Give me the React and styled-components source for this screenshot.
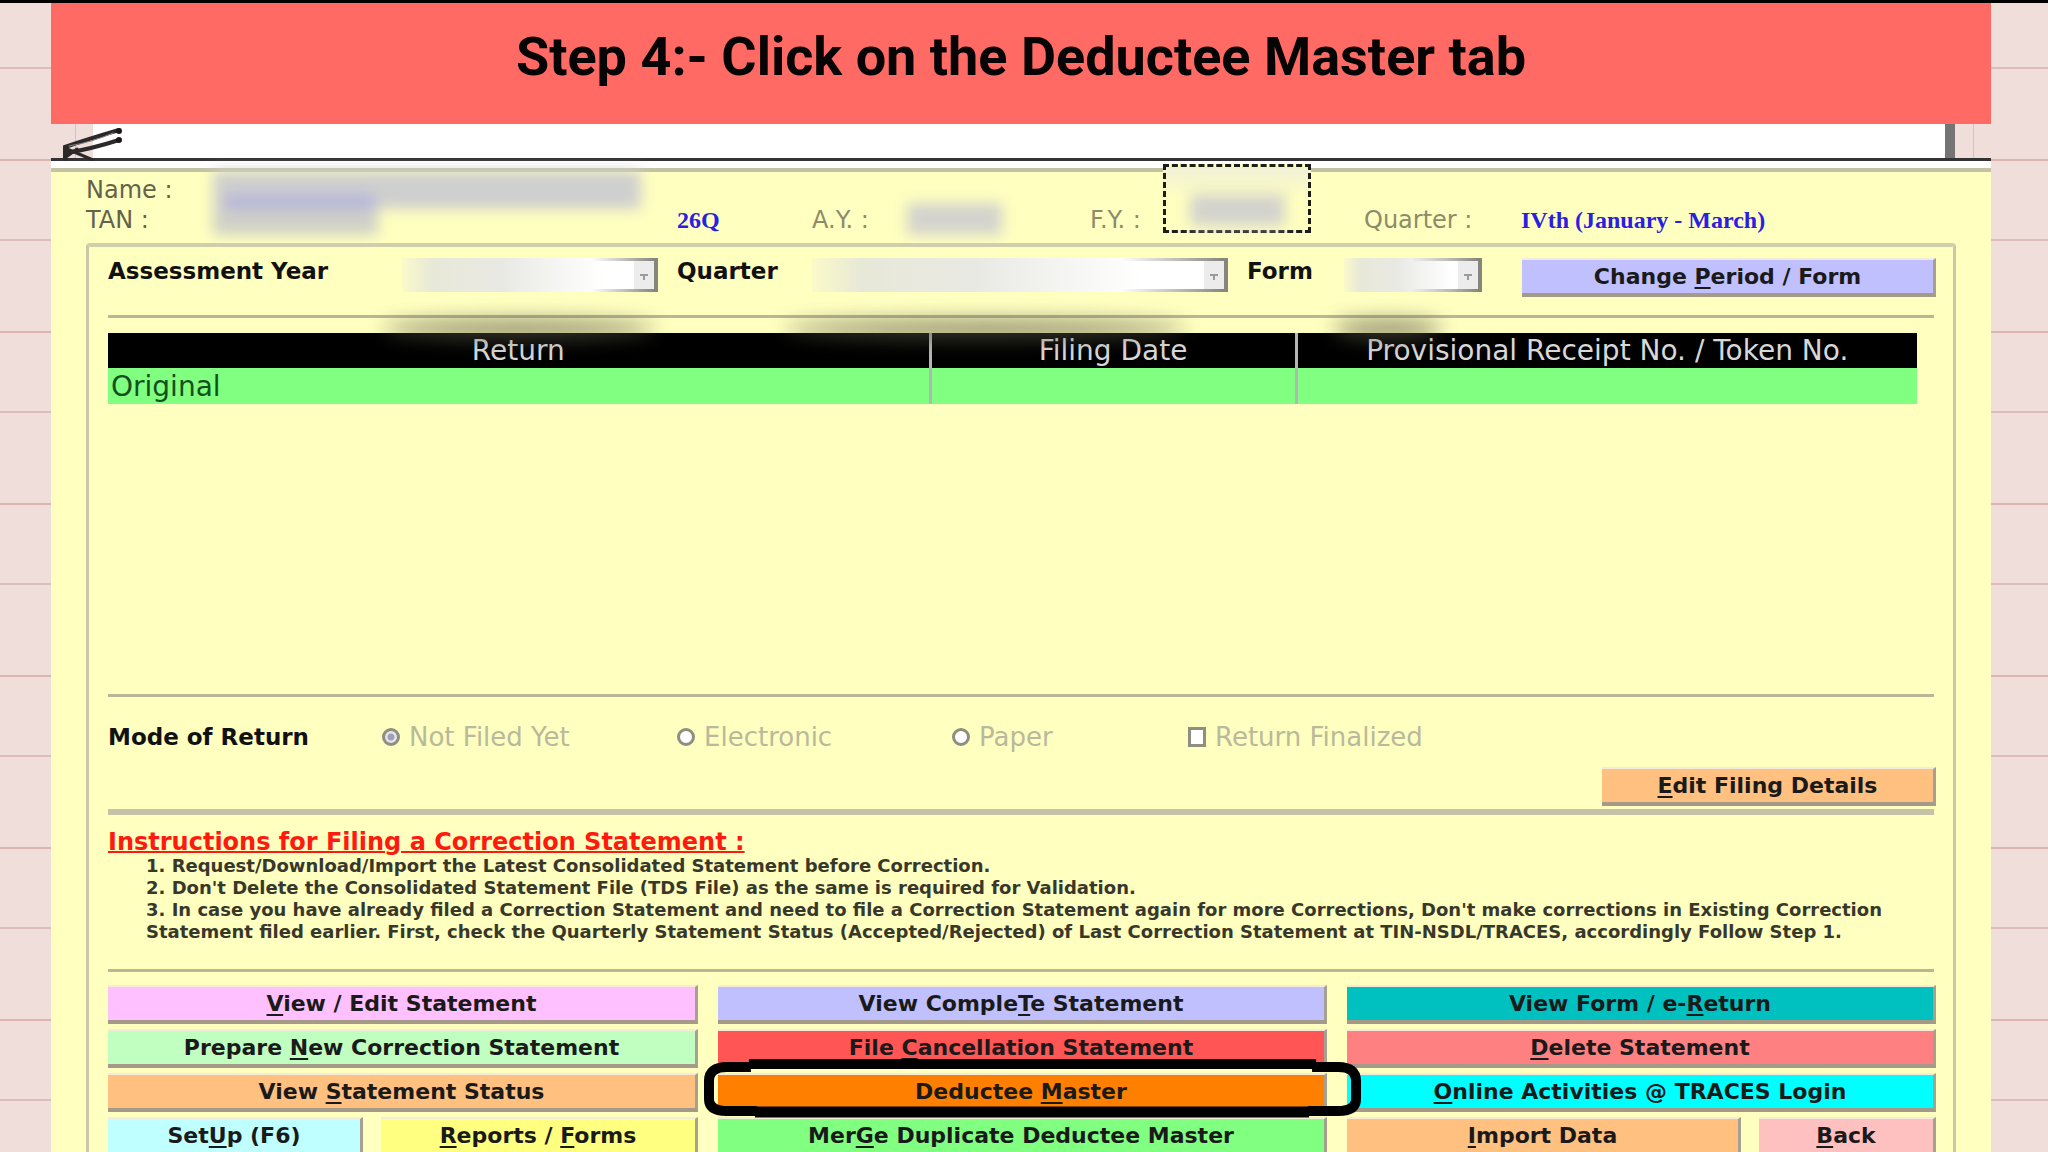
import React from "react";
import styled, { createGlobalStyle } from "styled-components";

const returns = [{ type: "Original", date: "", receipt: "" }];

const modes = ["Not Filed Yet", "Electronic", "Paper"];

const steps = [
  "1. Request/Download/Import the Latest Consolidated Statement before Correction.",
  "2. Don't Delete the Consolidated Statement File (TDS File) as the same is required for Validation.",
  "3. In case you have already filed a Correction Statement and need to file a Correction Statement again for more Corrections, Don't make corrections in Existing Correction Statement filed earlier. First, check the Quarterly Statement Status (Accepted/Rejected) of Last Correction Statement at TIN-NSDL/TRACES, accordingly Follow Step 1.",
];

const App = () => {
  return (
    <Page>
      <GlobalStyle />
      <Banner>
        <h1>Step 4:- Click on the Deductee Master tab</h1>
      </Banner>
      <Strip>
        <Paper />
        <Clip viewBox="0 0 70 36" aria-hidden="true">
          <path d="M12 34 V22 Q32 15 66 5" />
          <path d="M13 28 Q38 24 66 15" />
          <path d="M14 24 L40 35 M13 32 L24 24" strokeWidth="3" />
          <path d="M16 21 Q40 17 60 8" stroke="#8a8686" strokeWidth="1" />
          <circle cx="66" cy="6" r="3" />
          <circle cx="66" cy="15" r="3" />
        </Clip>
      </Strip>

      <Window>
        <Info>
          <span>Name :</span>
          <Hidden $area="1 / 2 / 3 / 3" $wide />
          <span className="tan">TAN :</span>
          <Value className="form">26Q</Value>
          <Faint className="ay">A.Y. :</Faint>
          <Hidden $area="2 / 5 / 3 / 6" />
          <Faint className="fy">F.Y. :</Faint>
          <Marquee>
            <Hidden />
          </Marquee>
          <Faint className="qtr">Quarter :</Faint>
          <Value className="period">IVth (January - March)</Value>
        </Info>

        <Frame>
          <Filters>
            <label htmlFor="year">Assessment Year</label>
            <Combo id="year" disabled $fade={75} />
            <label htmlFor="quarter">Quarter</label>
            <Combo id="quarter" disabled $fade={75} />
            <label htmlFor="form">Form</label>
            <Combo id="form" disabled $fade={50} />
            <Button $color="#c0c0ff">
              Change <u>P</u>eriod / Form
            </Button>
            <Smudge $left={15} $width={15} />
            <Smudge $left={37} $width={22} />
            <Smudge $left={67} $width={6} />
          </Filters>
          <Rule />

          <Listing>
            <Table>
              <colgroup>
                <col width="822" />
                <col width="366" />
                <col width="621" />
              </colgroup>
              <thead>
                <tr>
                  <th>Return</th>
                  <th>Filing Date</th>
                  <th>Provisional Receipt No. / Token No.</th>
                </tr>
              </thead>
              <tbody>
                {returns.map((row) => (
                  <tr key={row.type}>
                    <td>{row.type}</td>
                    <td>{row.date}</td>
                    <td>{row.receipt}</td>
                  </tr>
                ))}
              </tbody>
            </Table>
          </Listing>
          <Rule />

          <Mode>
            <b>Mode of Return</b>
            {modes.map((mode, i) => (
              <label key={mode}>
                <Radio type="radio" name="mode" defaultChecked={i === 0} disabled />
                {mode}
              </label>
            ))}
            <label>
              <Check type="checkbox" disabled />
              Return Finalized
            </label>
          </Mode>
          <EditRow>
            <Button $color="#ffc080">
              <u>E</u>dit Filing Details
            </Button>
          </EditRow>
          <Rule $thick />

          <Heading>Instructions for Filing a Correction Statement :</Heading>
          <Steps>
            {steps.map((step) => (
              <li key={step}>{step}</li>
            ))}
          </Steps>
          <Rule />

          <Actions>
            <Button $color="#ffc0ff"><span><u>V</u>iew / Edit Statement</span></Button>
            <Button $color="#c0c0ff"><span>View Comple<u>T</u>e Statement</span></Button>
            <Button $color="#00c0c0"><span>View Form / e-<u>R</u>eturn</span></Button>

            <Button $color="#c0ffc0"><span>Prepare <u>N</u>ew Correction Statement</span></Button>
            <Button $color="#ff5555"><span>File <u>C</u>ancellation Statement</span></Button>
            <Button $color="#ff8080"><span><u>D</u>elete Statement</span></Button>

            <Button $color="#ffc080"><span>View <u>S</u>tatement Status</span></Button>
            <Marked>
              <Button $color="#ff8000"><span>Deductee <u>M</u>aster</span></Button>
              <Ring viewBox="0 0 660 60" preserveAspectRatio="none" aria-hidden="true">
                <path d="M48 8 H24 Q6 8 6 22 V40 Q6 52 24 52 H54" />
                <path d="M610 8 H636 Q654 8 654 22 V40 Q654 52 636 52 H606" />
                <path d="M46 5 H614" />
                <path d="M52 53 H607" strokeWidth="11" />
              </Ring>
            </Marked>
            <Button $color="#00ffff"><span><u>O</u>nline Activities @ TRACES Login</span></Button>

            <Pair $cols="255fr 317fr">
              <Button $color="#c0ffff"><span>Set<u>U</u>p (F6)</span></Button>
              <Button $color="#ffff80"><span><u>R</u>eports / <u>F</u>orms</span></Button>
            </Pair>
            <Button $color="#80ff80"><span>Mer<u>G</u>e Duplicate Deductee Master</span></Button>
            <Pair $cols="394fr 177fr">
              <Button $color="#ffc080"><span><u>I</u>mport Data</span></Button>
              <Button $color="#ffc0c0"><span><u>B</u>ack</span></Button>
            </Pair>
          </Actions>
        </Frame>
      </Window>
    </Page>
  );
};

const GlobalStyle = createGlobalStyle`
  * {
    box-sizing: border-box;
  }
  body {
    margin: 0;
  }
`;

/* ruled paper behind everything */
const Page = styled.div`
  height: 100vh;
  overflow: hidden;
  padding: 0 57px 0 51px;
  border-top: 3px solid #000;
  font-family: "DejaVu Sans", Verdana, sans-serif;
  font-size: 23px;
  color: #111;
  background: repeating-linear-gradient(
      transparent 0 64px,
      #dcbdb9 64px 66px,
      transparent 66px 156px,
      #dcb5b3 156px 158px,
      transparent 158px 172px
    ),
    #efdeda;
`;

const Banner = styled.header`
  height: 121px;
  padding-top: 22px;
  text-align: center;
  background: #ff6b64;

  h1 {
    margin: 0;
    font: bold 54px/64px Roboto, sans-serif;
    color: #060404;
  }
`;

const Strip = styled.div`
  position: relative;
  display: flex;
  height: 44px;
  padding: 0 36px 7px 42px;
  background: linear-gradient(#333 0 0) 0 34px / 100% 3px no-repeat,
    linear-gradient(#fff 0 0) 0 37px / 100% 7px no-repeat,
    linear-gradient(#dcbfbb 0 0) 24px 0 / 1px 34px no-repeat,
    linear-gradient(#dcbfbb 0 0) calc(100% - 17px) 0 / 1px 34px no-repeat;
`;

const Paper = styled.div`
  flex: 1;
  margin-bottom: 3px;
  background: #fff;
  border-right: 10px solid #757373;
`;

const Clip = styled.svg`
  position: absolute;
  left: 2px;
  top: 1px;
  width: 70px;
  height: 36px;
  fill: none;
  stroke: #2b2929;
  stroke-width: 4;
  stroke-linecap: round;

  circle {
    fill: #1b1919;
    stroke: none;
  }
`;

const Window = styled.main`
  padding: 3px 35px 0;
  border-top: 4px solid #c3c3a3;
  background: #ffffc0;
`;

const Info = styled.div`
  display: grid;
  grid-template-columns: 127fr 464fr 135fr 95fr 183fr 73fr 201fr 157fr 435fr;
  grid-template-rows: 30px 30px;
  margin-bottom: 8px;
  font-size: 24px;
  line-height: 30px;
  color: #63634a;
  white-space: nowrap;

  > * {
    min-width: 0;
    grid-row: 2;
  }
  > :first-child {
    grid-row: 1;
  }
  .tan {
    grid-column: 1;
  }
  .form {
    grid-column: 3;
  }
  .ay {
    grid-column: 4;
  }
  .fy {
    grid-column: 6;
  }
  .qtr {
    grid-column: 8;
  }
  .period {
    grid-column: 9;
  }
`;

const Faint = styled.span`
  color: #8c8c6a;
`;

const Value = styled.b`
  font-family: "Liberation Serif", "Times New Roman", serif;
  font-size: 24px;
  color: #2a20e0;
`;

/* values that were smeared out before sharing */
const Hidden = styled.div`
  && {
    grid-area: ${(p) => p.$area || "auto"};
  }
  align-self: end;
  width: ${(p) => (p.$wide ? "428px" : "95px")};
  height: ${(p) => (p.$wide ? "64px" : "32px")};
  filter: blur(7px);
  background: ${(p) =>
    p.$wide
      ? `linear-gradient(#b4b4dc 0 0) 12px 24px / 150px 14px no-repeat,
         linear-gradient(#cfcfcf 0 0) 0 0 / 100% 38px no-repeat,
         linear-gradient(#d0d0c8 0 0) 0 38px / 165px 26px no-repeat`
      : "#d3d3cd"};
`;

const Marquee = styled.div`
  position: relative;
  z-index: 1;
  grid-column: 7;
  && {
    grid-row: 1 / 3;
  }
  display: flex;
  justify-content: center;
  width: 148px;
  height: 69px;
  margin-top: -11px;
  padding-bottom: 4px;
  border: 3px dashed #1d1d16;
  background: linear-gradient(#f0f0d8, #ffffc0 50%);
`;

const Frame = styled.section`
  padding: 11px 17px 12px 19px;
  border: 3px solid #c9c7a8;
  border-top: 4px solid #cfcfab;
  border-radius: 4px 4px 0 0;
`;

const Filters = styled.div`
  position: relative;
  display: grid;
  grid-template-columns: 294fr 275fr 135fr 435fr 97fr 178fr 414fr;
  align-items: start;
  height: 39px;

  label {
    font-weight: bold;
    line-height: 26px;
    white-space: nowrap;
  }
  select {
    margin-right: 19px;
  }
  #form {
    margin-right: 40px;
  }
`;

const Combo = styled.select`
  height: 34px;
  min-width: 0;
  appearance: none;
  border: solid #8c8c86;
  border-width: 3px 4px 3px 0;
  border-image: linear-gradient(90deg, transparent ${(p) => p.$fade}%, #85857e) 1;
  opacity: 1;
  background: linear-gradient(#9a9a9a 0 0) right 6px top 13px / 8px 2px no-repeat,
    linear-gradient(#9a9a9a 0 0) right 9px top 15px / 2px 4px no-repeat,
    linear-gradient(#ececec 0 0) right / 20px 100% no-repeat,
    linear-gradient(90deg, #fafac8, #e8e8d8 12%, #e9e9e4 40%, #fff 80%);
`;

const Smudge = styled.i`
  position: absolute;
  top: 62px;
  left: ${(p) => p.$left}%;
  width: ${(p) => p.$width}%;
  height: 18px;
  border-radius: 50%;
  background: #5c5c48;
  opacity: 0.7;
  filter: blur(10px);
`;

const Button = styled.button`
  width: 100%;
  height: 39px;
  padding: 0;
  border: 0;
  border-top: 2px solid #f4ecd8;
  border-right: 3px solid #a5a092;
  border-bottom: 4px solid #a59a88;
  background: ${(p) => p.$color};
  color: #1a1a1a;
  font: bold 22px/26px "DejaVu Sans", Verdana, sans-serif;
  white-space: nowrap;

  u {
    text-underline-offset: 3px;
    text-decoration-thickness: 2px;
  }
`;

const Rule = styled.hr`
  height: ${(p) => (p.$thick ? 6 : 3)}px;
  margin: ${(p) => (p.$thick ? "3px 2px 0 0" : "0 2px 0 0")};
  border: 0;
  background: ${(p) => (p.$thick ? "#c6c2a8" : "#b9b795")};

  ${Filters} + & {
    margin-top: 18px;
  }
`;

const Listing = styled.div`
  min-height: 376px;
  padding: 15px 19px 0 0;
`;

const Table = styled.table`
  width: 100%;
  table-layout: fixed;
  border-collapse: collapse;
  font-size: 28px;

  th,
  td {
    height: 35px;
    padding: 0 3px;
    border-right: 3px solid #b5b5b5;
    line-height: 34px;
    text-align: center;
    font-weight: normal;
    white-space: nowrap;
  }
  th:last-child,
  td:last-child {
    border-right: 0;
  }
  th {
    background: #000;
    color: #d8d8d8;
  }
  td {
    height: 36px;
    padding-top: 2px;
    background: #80ff80;
    color: #14501c;
    text-align: left;
  }
`;

const Mode = styled.div`
  display: grid;
  grid-template-columns: 274fr 295fr 275fr 236fr 748fr;
  align-items: center;
  height: 40px;
  margin: 20px 0 10px;
  white-space: nowrap;

  label {
    display: flex;
    align-items: center;
    gap: 9px;
    font-size: 26px;
    color: #b9b99c;
  }
`;

const Radio = styled.input`
  appearance: none;
  width: 18px;
  height: 18px;
  margin: 0;
  border: 3px solid #8f8f80;
  border-radius: 50%;
  background: #fff;

  &:checked {
    background: radial-gradient(#a0a0b8 0 3px, #e4e4ea 4px);
  }
`;

const Check = styled(Radio)`
  height: 20px;
  border-radius: 0;
`;

const EditRow = styled.div`
  display: flex;
  justify-content: flex-end;

  button {
    width: 334px;
  }
`;

const Heading = styled.h2`
  margin: 14px 0 0;
  font-size: 24px;
  line-height: 26px;
  color: #ff1a10;
  text-decoration: underline;
  text-decoration-thickness: 2px;
`;

const Steps = styled.ol`
  margin: 0 0 26px;
  padding: 0 0 0 38px;
  list-style: none;
  font-size: 18px;
  font-weight: bold;
  line-height: 22px;
  color: #38382a;
`;

const Actions = styled.div`
  display: grid;
  grid-template-columns: 590fr 609fr 589fr;
  gap: 5px 20px;
  margin-top: 13px;
`;

const Pair = styled.div`
  display: grid;
  grid-template-columns: ${(p) => p.$cols};
  gap: 18px;
`;

const Marked = styled.div`
  position: relative;
`;

/* hand drawn highlight over the tab to click */
const Ring = styled.svg`
  position: absolute;
  left: -15px;
  top: -14px;
  width: calc(100% + 50px);
  height: 60px;
  fill: none;
  stroke: #000;
  stroke-width: 10;
  pointer-events: none;
`;

export default App;
